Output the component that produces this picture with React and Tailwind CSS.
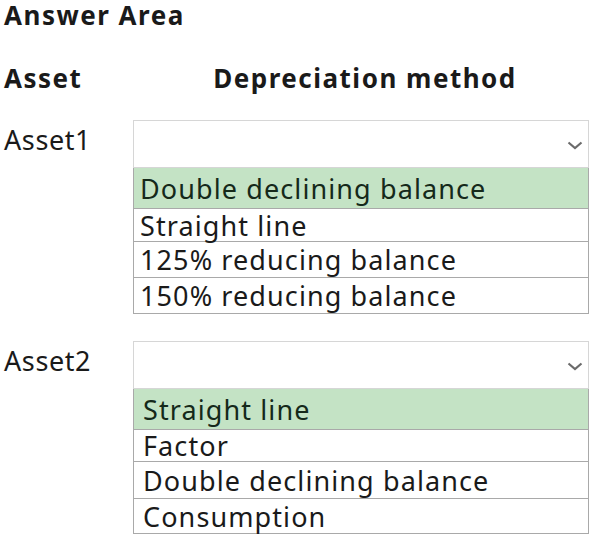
import React from "react";

function Chevron() {
  return (
    <svg width="16" height="9" viewBox="0 0 16 9" className="absolute right-[5px] top-[20px]">
      <path d="M1.5 1.5 L8 7 L14.5 1.5" fill="none" stroke="#6b6b6b" strokeWidth="2.2" />
    </svg>
  );
}

function Dropdown({ label, options, heights, pad }) {
  return (
    <div className="grid grid-cols-[133px_456px]">
      <div className="pl-[4px] pt-[5px] text-[27px] leading-[30px] tracking-[0.6px]">{label}</div>
      <div>
        <div className="relative h-[48px] border border-[#d6d6d6] bg-white">
          <Chevron />
        </div>
        <div className="border-x border-b border-[#a9a9a9]">
          {options.map((o, i) => (
            <div
              key={o}
              className={`flex items-center text-[27px] leading-none tracking-[1.1px] ${pad} ${
                i === 0 ? "bg-[#c4e3c5] text-[#15291a]" : "border-t border-[#a9a9a9] bg-white"
              }`}
              style={{ height: heights[i] }}
            >
              {o}
            </div>
          ))}
        </div>
      </div>
    </div>
  );
}

export default function App() {
  return (
    <div className="w-[596px] h-[539px] bg-white text-[#1a1a1a] font-['Noto_Sans',sans-serif] overflow-hidden">
      <div className="pl-[4px] text-[26px] font-bold leading-[30px] tracking-[1.5px]">Answer Area</div>
      <div className="grid grid-cols-[133px_456px] mt-[35px] font-bold text-[26px] leading-[26px] tracking-[1.5px]">
        <div className="pl-[4px]">Asset</div>
        <div className="text-center pl-[8px]">Depreciation method</div>
      </div>
      <div className="mt-[29px]">
        <Dropdown
          label="Asset1"
          options={["Double declining balance", "Straight line", "125% reducing balance", "150% reducing balance"]}
          heights={[40, 33, 36, 36]}
          pad="pl-[6px]"
        />
      </div>
      <div className="mt-[27px]">
        <Dropdown
          label="Asset2"
          options={["Straight line", "Factor", "Double declining balance", "Consumption"]}
          heights={[40, 32, 37, 35]}
          pad="pl-[9px]"
        />
      </div>
    </div>
  );
}
